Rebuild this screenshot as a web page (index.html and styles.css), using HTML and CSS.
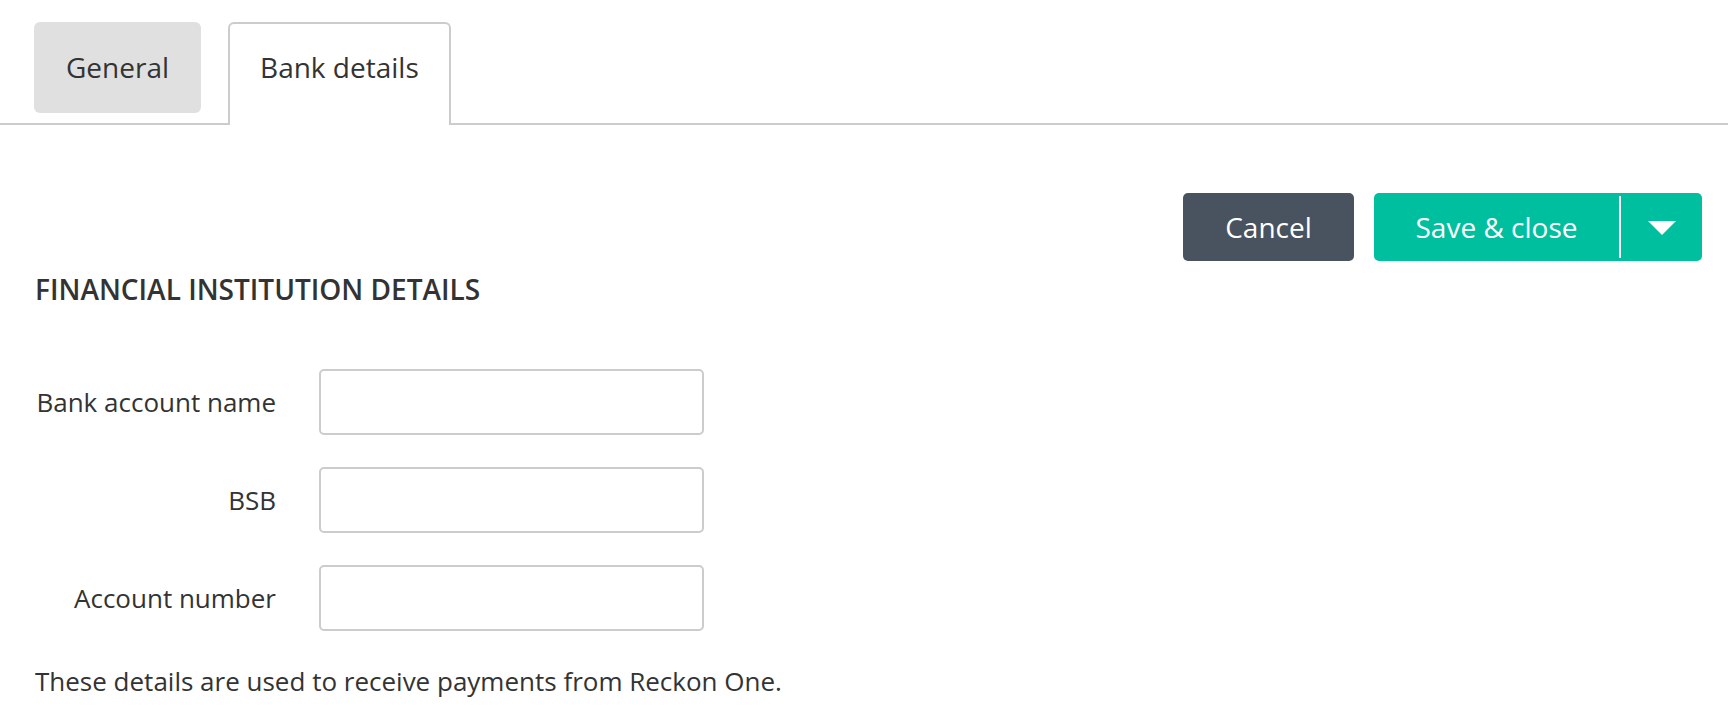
FILE: index.html
```html
<!DOCTYPE html>
<html lang="en">
<head>
<meta charset="utf-8">
<title>Bank details</title>
<link rel="stylesheet" href="styles.css">
</head>
<body>
  <nav class="tabs">
    <div class="tab">General</div>
    <div class="tab tab-active">Bank details</div>
  </nav>
  <main class="content">
    <div class="toolbar">
      <button class="btn btn-cancel" type="button">Cancel</button>
      <div class="btn-split">
        <button class="btn btn-save" type="button">Save &amp; close</button>
        <span class="split-divider"></span>
        <button class="btn btn-caret" type="button" aria-label="More options">
          <svg width="28" height="14" viewBox="0 0 28 14"><polygon points="0,0 28,0 14,14" fill="#ffffff"/></svg>
        </button>
      </div>
    </div>
    <h2 class="section-title">FINANCIAL INSTITUTION DETAILS</h2>
    <form class="form">
      <label class="field-label" for="acc-name">Bank account name</label>
      <input class="field-input" id="acc-name" type="text">
      <label class="field-label" for="bsb">BSB</label>
      <input class="field-input" id="bsb" type="text">
      <label class="field-label" for="acc-num">Account number</label>
      <input class="field-input" id="acc-num" type="text">
    </form>
    <p class="note">These details are used to receive payments from Reckon One.</p>
  </main>
</body>
</html>
```

FILE: styles.css
```css
* {
  box-sizing: border-box;
}

html, body {
  margin: 0;
  padding: 0;
  background: #ffffff;
}

body {
  width: 1728px;
  height: 716px;
  overflow: hidden;
  font-family: "Open Sans", "Noto Sans", sans-serif;
  color: #333333;
}

.tabs {
  display: flex;
  align-items: flex-start;
  gap: 27px;
  height: 125px;
  padding: 22px 0 0 34px;
  border-bottom: 2px solid #cccccc;
}

.tab {
  height: 91px;
  padding: 0 32px;
  line-height: 91px;
  font-size: 28px;
  color: #333333;
  background: #e0e0e0;
  border-radius: 6px;
  white-space: nowrap;
}

.tab-active {
  height: 103px;
  padding: 0 30px;
  line-height: 87px;
  background: #ffffff;
  border: 2px solid #cccccc;
  border-bottom: none;
  border-radius: 6px 6px 0 0;
  position: relative;
  z-index: 1;
}

.content {
  padding: 0 26px 0 35px;
}

.toolbar {
  display: flex;
  justify-content: flex-end;
  gap: 20px;
  margin-top: 68px;
}

.btn {
  height: 68px;
  border: none;
  margin: 0;
  padding: 0;
  font-family: "Open Sans", "Noto Sans", sans-serif;
  font-size: 28px;
  color: #ffffff;
  cursor: pointer;
}

.btn-cancel {
  width: 171px;
  background: #48535f;
  border-radius: 5px;
}

.btn-split {
  display: flex;
  align-items: stretch;
  height: 68px;
  background: #00bf9f;
  border-radius: 5px;
}

.btn-save {
  width: 245px;
  background: transparent;
}

.split-divider {
  width: 2px;
  margin: 3px 0;
  background: #ffffff;
}

.btn-caret {
  width: 81px;
  background: transparent;
  display: flex;
  align-items: center;
  justify-content: center;
}

.btn-caret svg {
  display: block;
  margin-top: 2px;
}

.section-title {
  margin: 8px 0 0 0;
  font-size: 28px;
  line-height: 40px;
  font-weight: 600;
  color: #333333;
}

.form {
  display: grid;
  grid-template-columns: 241px 385px;
  column-gap: 43px;
  row-gap: 32px;
  align-items: center;
  margin-top: 60px;
}

.field-label {
  text-align: right;
  white-space: nowrap;
  font-size: 26px;
  color: #333333;
}

.field-input {
  width: 385px;
  height: 66px;
  border: 2px solid #cccccc;
  border-radius: 5px;
  background: #ffffff;
  font-family: "Open Sans", "Noto Sans", sans-serif;
  font-size: 26px;
  padding: 0 12px;
  outline: none;
}

.note {
  margin: 32px 0 0 0;
  font-size: 26px;
  line-height: 36px;
  color: #333333;
}
```
